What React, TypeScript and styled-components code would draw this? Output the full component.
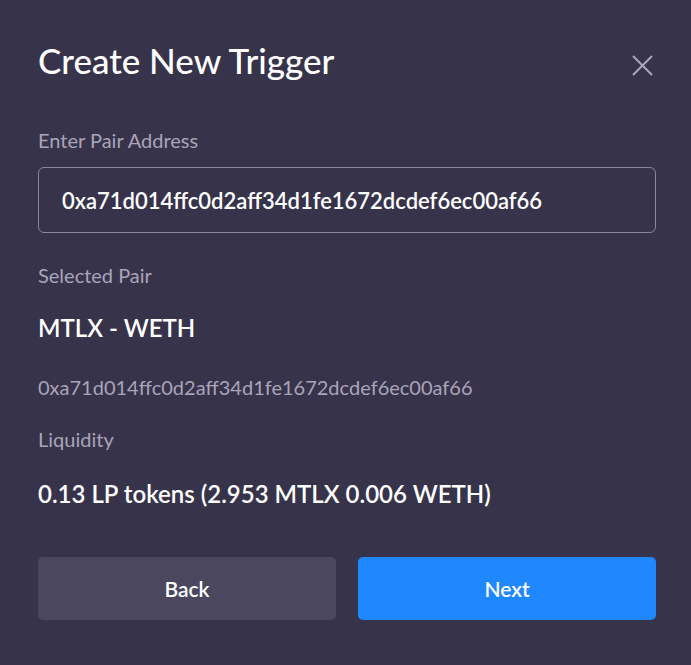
import React from "react";
import styled, { createGlobalStyle } from "styled-components";

const GlobalStyle = createGlobalStyle`
  html, body {
    margin: 0;
    padding: 0;
    background: #37334b;
  }
  body {
    font-family: "Lato", "Open Sans", sans-serif;
    -webkit-font-smoothing: antialiased;
  }
`;

const Modal = styled.div`
  width: 691px;
  height: 665px;
  box-sizing: border-box;
  background: #37334b;
  padding: 40px 35px 0 38px;
  display: flex;
  flex-direction: column;
`;

const Header = styled.div`
  display: flex;
  align-items: flex-start;
  justify-content: space-between;
  height: 40px;
`;

const Title = styled.h1`
  margin: 0;
  font-size: 35px;
  line-height: 40px;
  font-weight: 500;
  color: #ffffff;
`;

const CloseButton = styled.button`
  background: none;
  border: none;
  padding: 0;
  margin: 15px 3px 0 0;
  width: 21px;
  height: 21px;
  display: flex;
  color: #aaa7b9;
  cursor: pointer;
`;

const Label = styled.div<{ $top: number }>`
  margin-top: ${(p) => p.$top}px;
  font-size: 20px;
  line-height: 24px;
  color: #a8a5b8;
`;

const AddressInput = styled.input`
  margin-top: 15px;
  box-sizing: border-box;
  width: 618px;
  height: 66px;
  padding: 0 23px;
  background: transparent;
  border: 1px solid #8b8899;
  border-radius: 6px;
  font-family: inherit;
  font-size: 22px;
  font-weight: 600;
  color: #ffffff;
  outline: none;
`;

const Value = styled.div<{ $top: number }>`
  margin-top: ${(p) => p.$top}px;
  font-size: 24px;
  line-height: 28px;
  font-weight: 600;
  color: #ffffff;
`;

const SubValue = styled.div`
  margin-top: 33px;
  font-size: 20px;
  line-height: 24px;
  color: #a8a5b8;
`;

const Actions = styled.div`
  margin-top: 49px;
  width: 618px;
  display: grid;
  grid-template-columns: 1fr 1fr;
  gap: 22px;
`;

const ActionButton = styled.button<{ $primary?: boolean }>`
  height: 63px;
  border: none;
  border-radius: 5px;
  background: ${(p) => (p.$primary ? "#1f88ff" : "#4b475f")};
  color: #ffffff;
  font-family: inherit;
  font-size: 21px;
  font-weight: 600;
  cursor: pointer;
`;

const address = "0xa71d014ffc0d2aff34d1fe1672dcdef6ec00af66";

export default function App() {
  return (
    <>
      <GlobalStyle />
      <Modal>
        <Header>
          <Title>Create New Trigger</Title>
          <CloseButton aria-label="Close">
            <svg width="21" height="21" viewBox="0 0 21 21" fill="none" stroke="currentColor" strokeWidth="2">
              <path d="M1 1L20 20M20 1L1 20" />
            </svg>
          </CloseButton>
        </Header>
        <Label $top={48}>Enter Pair Address</Label>
        <AddressInput defaultValue={address} />
        <Label $top={30}>Selected Pair</Label>
        <Value $top={27}>MTLX - WETH</Value>
        <SubValue>{address}</SubValue>
        <Label $top={28}>Liquidity</Label>
        <Value $top={29}>0.13 LP tokens (2.953 MTLX 0.006 WETH)</Value>
        <Actions>
          <ActionButton>Back</ActionButton>
          <ActionButton $primary>Next</ActionButton>
        </Actions>
      </Modal>
    </>
  );
}
